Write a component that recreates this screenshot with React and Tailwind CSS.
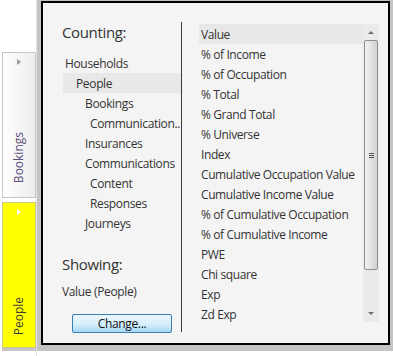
import React from 'react';

const tree = [
  { label: 'Households', indent: 'pl-[3px]' },
  { label: 'People', indent: 'pl-[13px]', selected: true },
  { label: 'Bookings', indent: 'pl-[23px]' },
  { label: 'Communication..', indent: 'pl-[28px]' },
  { label: 'Insurances', indent: 'pl-[23px]' },
  { label: 'Communications', indent: 'pl-[23px]' },
  { label: 'Content', indent: 'pl-[28px]' },
  { label: 'Responses', indent: 'pl-[28px]' },
  { label: 'Journeys', indent: 'pl-[23px]' },
];

const measures = [
  'Value',
  '% of Income',
  '% of Occupation',
  '% Total',
  '% Grand Total',
  '% Universe',
  'Index',
  'Cumulative Occupation Value',
  'Cumulative Income Value',
  '% of Cumulative Occupation',
  '% of Cumulative Income',
  'PWE',
  'Chi square',
  'Exp',
  'Zd Exp',
];

function SideTab({ label, active }) {
  return (
    <div
      className={
        'flex h-[146px] w-[34px] flex-col items-center border ' +
        (active
          ? 'border-[#c8c890] bg-[#ffff00] shadow-[0_3px_0_#c4c4c4]'
          : 'border-[#c6c6c6] bg-gradient-to-r from-white to-[#ececec]')
      }
    >
      <span
        className={
          'mt-[6px] h-0 w-0 border-y-[3px] border-l-[4px] border-y-transparent ' +
          (active ? 'border-l-white' : 'border-l-[#9a9a9a]')
        }
      />
      <div className="flex-1" />
      <span
        className={
          'rotate-180 text-[12px] leading-[14px] [writing-mode:vertical-rl] ' +
          (active ? 'mb-[12px] text-[#3a3a3a]' : 'mb-[14px] text-[#5c4d78]')
        }
      >
        {label}
      </span>
    </div>
  );
}

export default function App() {
  return (
    <div className="flex h-[356px] w-[393px] bg-white font-['Open_Sans',sans-serif] text-[#333]">
      {/* tab strip */}
      <div className="flex w-[37px] flex-col gap-[4px] border-r border-[#e2e2e2] pl-[2px] pt-[52px]">
        <SideTab label="Bookings" />
        <SideTab label="People" active />
      </div>

      {/* panel with shadow */}
      <div className="h-[351px] w-[356px] bg-[#c4c4c4] pl-[4px] pt-[1px]">
        <div className="flex h-[344px] w-[349px] border-2 border-black bg-[#f4f4f4]">
          {/* left: counting / showing */}
          <div className="flex w-[138px] flex-col pl-[19px] pt-[19px] tracking-[-0.35px]">
            <div className="text-[15px] leading-[20px]">Counting:</div>
            <div className="mt-[11px] flex flex-col">
              {tree.map((t) => (
                <div
                  key={t.label}
                  className={
                    'h-[20px] whitespace-nowrap pt-px text-[12px] leading-[20px] ' +
                    t.indent +
                    (t.selected ? ' ml-[1px] bg-[#e8e8e8]' : '')
                  }
                >
                  {t.label}
                </div>
              ))}
            </div>
            <div className="mt-[21px] text-[15px] leading-[20px]">Showing:</div>
            <div className="mt-[8px] text-[12px] leading-[20px]">Value (People)</div>
            <button className="ml-[10px] mt-[12px] h-[19px] w-[100px] rounded-[2px] border border-[#3c7fb1] bg-gradient-to-b from-[#eaf6fd] via-[#d9f0fc] to-[#a7d9f5] text-[12px] leading-[16px] text-[#111]">
              Change...
            </button>
          </div>

          {/* divider */}
          <div className="mt-[19px] h-[310px] w-px bg-[#3a3a3a]" />

          {/* right: measure list */}
          <div className="ml-[17px] mt-[21px] flex h-[298px]">
            <div className="flex w-[164px] flex-col tracking-[-0.4px]">
              {measures.map((m, i) => (
                <div
                  key={m}
                  className={
                    'h-[20px] whitespace-nowrap pl-[2px] pt-px text-[12px] leading-[20px] ' +
                    (i === 0 ? 'bg-[#e8e8e8]' : '')
                  }
                >
                  {m}
                </div>
              ))}
            </div>
            {/* scrollbar */}
            <div className="flex w-[16px] flex-col items-center bg-[#ebebeb]">
              <div className="flex h-[16px] items-center justify-center">
                <span className="h-0 w-0 border-x-[3px] border-b-[3px] border-x-transparent border-b-[#707070]" />
              </div>
              <div className="flex h-[230px] w-[14px] items-center justify-center rounded-[2px] border border-[#8e8f8f] bg-gradient-to-r from-[#f2f2f2] to-[#d2d2d2]">
                <div className="flex flex-col gap-[1px]">
                  <span className="h-px w-[5px] bg-[#555]" />
                  <span className="h-px w-[5px] bg-[#555]" />
                  <span className="h-px w-[5px] bg-[#555]" />
                </div>
              </div>
              <div className="flex-1" />
              <div className="flex h-[18px] items-center justify-center">
                <span className="h-0 w-0 border-x-[3px] border-t-[3px] border-x-transparent border-t-[#707070]" />
              </div>
            </div>
          </div>
        </div>
      </div>
    </div>
  );
}
